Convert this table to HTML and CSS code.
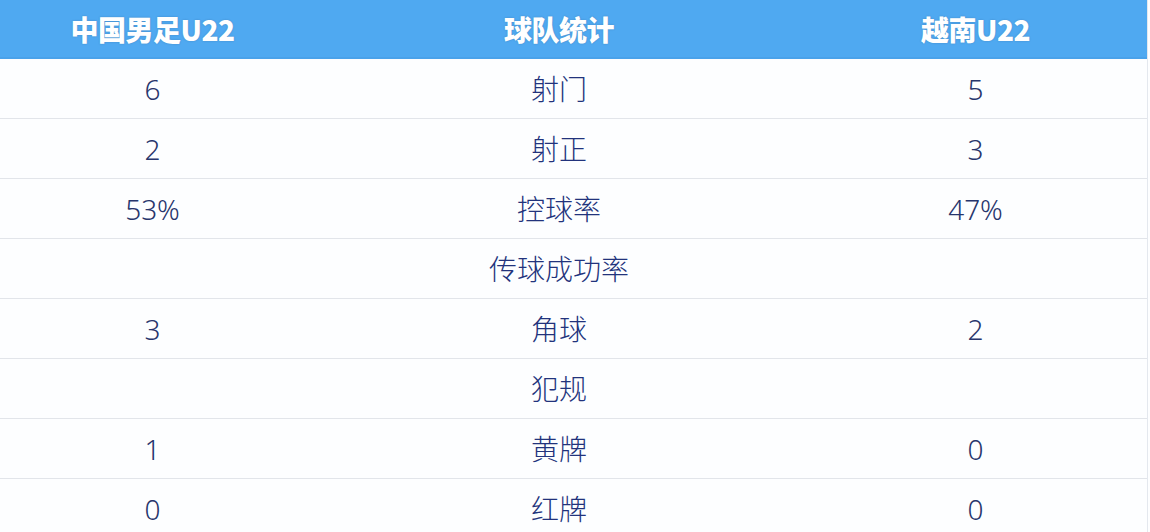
FILE: index.html
```html
<!DOCTYPE html>
<html lang="zh-CN">
<head>
<meta charset="utf-8">
<title>球队统计</title>
<link rel="stylesheet" href="styles.css">
</head>
<body>
<div class="stats">
  <div class="row head">
    <div class="cell">中国男足U22</div>
    <div class="cell">球队统计</div>
    <div class="cell right">越南U22</div>
  </div>
  <div class="row"><div class="cell num">6</div><div class="cell">射门</div><div class="cell num right">5</div></div>
  <div class="row"><div class="cell num">2</div><div class="cell">射正</div><div class="cell num right">3</div></div>
  <div class="row"><div class="cell num">53%</div><div class="cell">控球率</div><div class="cell num right">47%</div></div>
  <div class="row"><div class="cell num"></div><div class="cell">传球成功率</div><div class="cell num right"></div></div>
  <div class="row"><div class="cell num">3</div><div class="cell">角球</div><div class="cell num right">2</div></div>
  <div class="row"><div class="cell num"></div><div class="cell">犯规</div><div class="cell num right"></div></div>
  <div class="row"><div class="cell num">1</div><div class="cell">黄牌</div><div class="cell num right">0</div></div>
  <div class="row"><div class="cell num">0</div><div class="cell">红牌</div><div class="cell num right">0</div></div>
</div>
</body>
</html>
```

FILE: styles.css
```css
html, body {
  margin: 0;
  padding: 0;
  background: #fdfeff;
  overflow: hidden;
}

.stats {
  width: 1147px;
  border-right: 1px solid #e4e8ee;
  font-family: "Noto Sans", "Noto Sans CJK SC", sans-serif;
}

.row {
  display: grid;
  grid-template-columns: 305px 508px 1fr;
  height: 60px;
  border-bottom: 1px solid #e2e5ea;
  box-sizing: border-box;
  align-items: center;
  font-size: 28px;
  font-weight: 300;
  color: #22337c;
}

.row.head {
  height: 59px;
  background: #4fa9f1;
  border-bottom: 2px solid #4aa2ea;
  color: #ffffff;
  font-weight: 900;
  font-size: 28px;
  text-shadow: 0 0 2px rgba(40, 60, 90, 0.3);
}

.head .cell {
  font-family: "Noto Sans CJK SC", "Noto Sans", sans-serif;
  letter-spacing: -0.5px;
}

.cell {
  text-align: center;
  line-height: 1;
}

.cell.right {
  padding-right: 9px;
}

.num {
  color: #27356c;
}
```
